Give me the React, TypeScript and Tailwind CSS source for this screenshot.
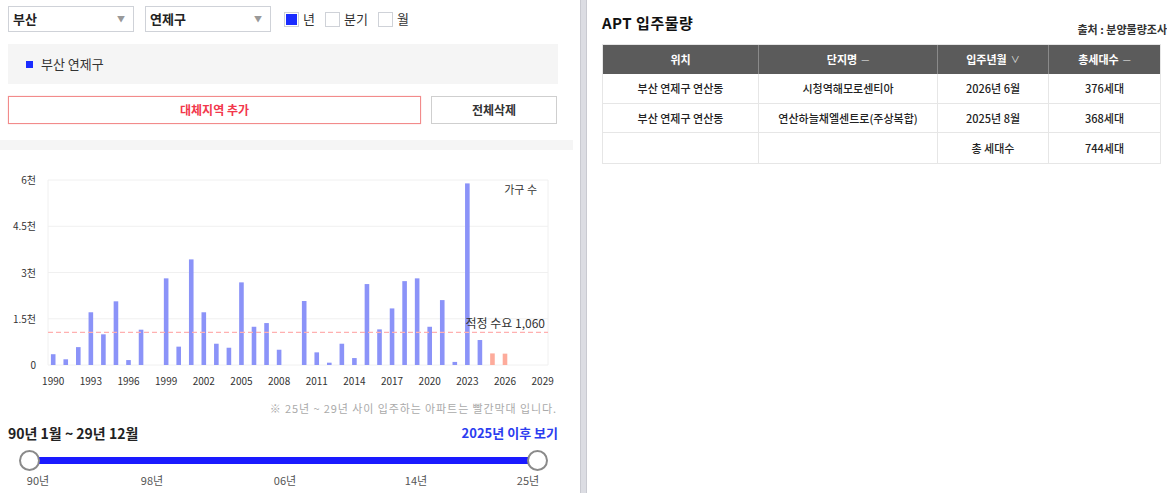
import React from 'react';

const FONT = { fontFamily: '"Noto Sans CJK KR", "Noto Sans", sans-serif' };

// 연도별 입주 가구 수 (1990 ~ 2029)
const supply: number[] = [
  350, 185, 580, 1710, 995, 2065, 160, 1145, 0, 2810,
  595, 3425, 1710, 690, 560, 2680, 1240, 1360, 495, 0,
  2075, 410, 75, 690, 225, 2625, 1155, 1835, 2720, 2810,
  1240, 2105, 100, 5890, 810, 376, 368, 0, 0, 0,
];

const TOP = 30;
const BASE = 215;
const MAX = 6000;
const yOf = (v: number) => BASE - (v / MAX) * (BASE - TOP);
const xOf = (i: number) => 53.2 + 12.55 * i;

function Select({ label }: { label: string }) {
  return (
    <div className="w-[126px] h-[26px] border border-[#cfd2d8] flex items-center justify-between pl-[4px] pr-[8px] bg-white">
      <span className="text-[13px] font-semibold text-[#222]">{label}</span>
      <span className="text-[8px] text-[#999]">▼</span>
    </div>
  );
}

function Check({ label, checked }: { label: string; checked?: boolean }) {
  return (
    <div className="flex items-center gap-[4px]">
      <div className="w-[15px] h-[15px] border border-[#cfd2d8] bg-white p-[1px]">
        {checked && <div className="w-full h-full bg-[#1a2cff]" />}
      </div>
      <span className="text-[13px] text-[#333]">{label}</span>
    </div>
  );
}

function Chart() {
  const grid = [0, 1500, 3000, 4500, 6000];
  const labels = ['0', '1.5천', '3천', '4.5천', '6천'];
  return (
    <svg width={573} height={250} className="block">
      {grid.map((g) => (
        <line key={g} x1={48} x2={548} y1={yOf(g)} y2={yOf(g)} stroke="#f0f0f0" strokeWidth={1} />
      ))}
      <line x1={48} x2={48} y1={TOP} y2={BASE} stroke="#f0f0f0" />
      <line x1={548} x2={548} y1={TOP} y2={BASE} stroke="#f0f0f0" />
      {grid.map((g, i) => (
        <text key={g} x={36} y={yOf(g) + 4} textAnchor="end" fontSize={10} fill="#333">
          {labels[i]}
        </text>
      ))}
      {supply.map((v, i) =>
        v > 0 ? (
          <rect
            key={i}
            x={xOf(i) - 2.3}
            y={yOf(v)}
            width={4.6}
            height={BASE - yOf(v)}
            fill={i >= 35 ? '#fdab9b' : '#8b93f8'}
          />
        ) : null
      )}
      <line x1={48} x2={548} y1={yOf(1060)} y2={yOf(1060)} stroke="#ffb0b0" strokeWidth={1.2} strokeDasharray="5 3" />
      <text x={545} y={178} textAnchor="end" fontSize={12} fill="#333">적정 수요 1,060</text>
      <text x={537} y={44} textAnchor="end" fontSize={11} fill="#333">가구 수</text>
      {Array.from({ length: 14 }, (_, k) => k * 3).map((i) => (
        <text key={i} x={xOf(i)} y={235} textAnchor="middle" fontSize={10} fill="#333">
          {1990 + i}
        </text>
      ))}
    </svg>
  );
}

function Slider() {
  const ticks = [
    { t: '90년', x: 38 },
    { t: '98년', x: 152 },
    { t: '06년', x: 285 },
    { t: '14년', x: 416 },
    { t: '25년', x: 528 },
  ];
  return (
    <div className="px-[8px]">
      <div className="relative h-[24px] mt-[5px]">
        <div className="absolute left-[22px] w-[508px] top-[9px] h-[7px] bg-[#1a1aff]" />
        <div className="absolute left-[11px] top-[2px] w-[21px] h-[21px] rounded-full bg-white border-2 border-[#8a8a8a]" />
        <div className="absolute left-[519px] top-[2px] w-[21px] h-[21px] rounded-full bg-white border-2 border-[#8a8a8a]" />
      </div>
      <div className="relative h-[16px]">
        {ticks.map((k) => (
          <span
            key={k.t}
            className="absolute top-0 text-[11px] leading-[16px] text-[#555] -translate-x-1/2"
            style={{ left: k.x - 8 }}
          >
            {k.t}
          </span>
        ))}
      </div>
    </div>
  );
}

const rows = [
  ['부산 연제구 연산동', '시청역해모로센티아', '2026년 6월', '376세대'],
  ['부산 연제구 연산동', '연산하늘채엘센트로(주상복합)', '2025년 8월', '368세대'],
  ['', '', '총 세대수', '744세대'],
];

function SupplyTable() {
  const widths = ['w-[156px]', 'w-[179px]', 'w-[111px]', 'flex-1'];
  const heads: [string, string][] = [
    ['위치', ''],
    ['단지명', '—'],
    ['입주년월', '∨'],
    ['총세대수', '—'],
  ];
  return (
    <div className="w-[559px] border border-[#e6e6e6]">
      <div className="flex h-[29px] bg-[#5b5b5b]">
        {heads.map(([h, mark], i) => (
          <div
            key={h}
            className={`${widths[i]} flex items-center justify-center gap-[4px] text-[11px] font-bold text-white ${i < 3 ? 'border-r border-[#8a8a8a]' : ''}`}
          >
            {h}
            {mark && <span className="text-[9px] font-normal text-[#e8e8e8]">{mark}</span>}
          </div>
        ))}
      </div>
      {rows.map((r, ri) => (
        <div key={ri} className={`flex h-[29.5px] ${ri < 2 ? 'border-b border-[#e6e6e6]' : ''}`}>
          {r.map((c, i) => (
            <div
              key={i}
              className={`${widths[i]} flex items-center justify-center text-[11px] font-medium text-[#222] ${i < 3 ? 'border-r border-[#e6e6e6]' : ''}`}
            >
              {c}
            </div>
          ))}
        </div>
      ))}
    </div>
  );
}

export default function App() {
  return (
    <div className="flex w-[1167px] h-[493px] bg-white overflow-hidden" style={FONT}>
      {/* 왼쪽: 지역 선택과 차트 */}
      <div className="w-[580px] shrink-0 flex flex-col">
        <div className="flex items-center gap-[11px] pt-[6px] px-[8px]">
          <Select label="부산" />
          <Select label="연제구" />
          <div className="flex items-center gap-[10px] ml-[2px]">
            <Check label="년" checked />
            <Check label="분기" />
            <Check label="월" />
          </div>
        </div>

        <div className="mt-[12px] mx-[8px] w-[550px] h-[40px] bg-[#f5f5f5] flex items-center pl-[18px] gap-[8px]">
          <div className="w-[7px] h-[7px] bg-[#1a2cff]" />
          <span className="text-[13px] text-[#333]">부산 연제구</span>
        </div>

        <div className="mt-[12px] px-[8px] flex gap-[10px]">
          <button className="w-[413px] h-[28px] border border-[#f28b8b] shadow-[0_0_1px_#f8b0b0] text-[12px] font-bold text-[#f2384c]">
            대체지역 추가
          </button>
          <button className="w-[126px] h-[28px] border border-[#cfcfcf] text-[12px] font-bold text-[#333]">
            전체삭제
          </button>
        </div>

        <div className="mt-[16px] w-[573px] h-[10px] bg-[#f5f5f5]" />

        <Chart />

        <div className="px-[23px] text-right text-[11px] leading-[16px] tracking-[0.9px] text-[#aaa]">
          ※ 25년 ~ 29년 사이 입주하는 아파트는 빨간막대 입니다.
        </div>

        <div className="mt-[7px] px-[8px] pr-[22px] h-[20px] flex items-center justify-between">
          <span className="text-[14px] font-bold text-[#222]">90년 1월 ~ 29년 12월</span>
          <span className="text-[13px] font-bold text-[#2b3cf0]">2025년 이후 보기</span>
        </div>

        <Slider />
      </div>

      {/* 구분선 */}
      <div className="w-[7px] shrink-0 bg-[#dcdde3] border-x border-[#c9cad1]" />

      {/* 오른쪽: 입주물량 표 */}
      <div className="flex-1 pl-[15px] pr-[6px] pt-[14px]">
        <div className="flex items-end justify-between -mr-[6px] h-[20px]">
          <span className="text-[15px] font-bold text-[#111] tracking-[0.5px]">APT 입주물량</span>
          <span className="text-[11px] font-semibold text-[#333] leading-[14px] -mb-[2px]">출처 : 분양물량조사</span>
        </div>
        <div className="mt-[10px]">
          <SupplyTable />
        </div>
      </div>
    </div>
  );
}
